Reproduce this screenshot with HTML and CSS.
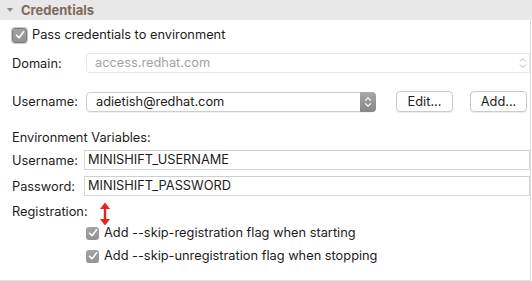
FILE: index.html
```html
<!DOCTYPE html>
<html lang="en">
<head>
    <meta charset="UTF-8">
    <title>Credentials</title>
    <link rel="stylesheet" href="styles.css">
</head>
<body>

    <!-- Section header -->
    <div class="section-header">
        <span class="twisty"></span>
        <span class="section-title">Credentials</span>
    </div>

    <!-- Credentials panel -->
    <div class="panel">
        <label class="check-row pass-row">
            <span class="checkbox big">
                <svg width="10" height="10" viewBox="0 0 10 10"><path d="M1.5 5.2 L4 7.8 L8.6 1.8" fill="none" stroke="#fff" stroke-width="1.6" stroke-linecap="round" stroke-linejoin="round"/></svg>
            </span>
            Pass credentials to environment
        </label>

        <div class="form-row domain-row">
            <span class="label">Domain:</span>
            <div class="field disabled">
                access.redhat.com
                <svg class="spin" width="8" height="12" viewBox="0 0 8 12"><path d="M1 4.5 L4 1.5 L7 4.5 M1 7.5 L4 10.5 L7 7.5" fill="none" stroke="#b5b5b5" stroke-width="1"/></svg>
            </div>
        </div>

        <div class="form-row user-row">
            <span class="label">Username:</span>
            <div class="combo">
                <span class="combo-text">adietish@redhat.com</span>
                <span class="combo-arrow">
                    <svg width="8" height="12" viewBox="0 0 8 12"><path d="M1.2 4.6 L4 1.8 L6.8 4.6 M1.2 7.4 L4 10.2 L6.8 7.4" fill="none" stroke="#fff" stroke-width="1.2"/></svg>
                </span>
            </div>
            <button class="btn edit-btn">Edit...</button>
            <button class="btn add-btn">Add...</button>
        </div>

        <div class="group-title">Environment Variables:</div>

        <div class="form-row env-row">
            <span class="label short">Username:</span>
            <div class="field">MINISHIFT_USERNAME</div>
        </div>
        <div class="form-row env-row pass-field">
            <span class="label short">Password:</span>
            <div class="field">MINISHIFT_PASSWORD</div>
        </div>

        <div class="group-title reg-title">Registration:</div>

        <label class="check-row flag-row">
            <span class="checkbox">
                <svg width="10" height="10" viewBox="0 0 10 10"><path d="M1.5 5.2 L4 7.8 L8.6 1.8" fill="none" stroke="#fff" stroke-width="1.5" stroke-linecap="round" stroke-linejoin="round"/></svg>
            </span>
            Add --skip-registration flag when starting
        </label>
        <label class="check-row flag-row second">
            <span class="checkbox">
                <svg width="10" height="10" viewBox="0 0 10 10"><path d="M1.5 5.2 L4 7.8 L8.6 1.8" fill="none" stroke="#fff" stroke-width="1.5" stroke-linecap="round" stroke-linejoin="round"/></svg>
            </span>
            Add --skip-unregistration flag when stopping
        </label>

        <!-- annotation arrow -->
        <svg class="red-arrow" width="12" height="24" viewBox="0 0 12 24">
            <path d="M6 5 L6 19" stroke="#e8231d" stroke-width="2.4"/>
            <path d="M1 7 L6 0.5 L11 7 Z M1 17 L6 23.5 L11 17 Z" fill="#e8231d"/>
        </svg>
    </div>

</body>
</html>
```

FILE: styles.css
```css
body {
    margin: 0;
    font-family: Inter, "Liberation Sans", Arial, sans-serif;
    font-size: 12.8px;
    color: #1c1c1c;
    background: #fff;
    width: 532px;
}

.section-header {
    height: 20px;
    background-color: #e8e8e8;
    display: flex;
    align-items: center;
}

.twisty {
    width: 0;
    height: 0;
    margin-left: 7px;
    border-left: 3.5px solid transparent;
    border-right: 3.5px solid transparent;
    border-top: 4px solid #8a8a8a;
}

.section-title {
    margin-left: 8px;
    font-weight: bold;
    font-size: 13px;
    color: #7d6b5a;
}

.panel {
    position: relative;
    width: 518px;
    padding: 7px 0 16px 12px;
    border-right: 1px solid #dcdcdc;
    border-bottom: 1px solid #e2e2e2;
    margin-right: 1px;
}

/* checkbox rows */
.check-row {
    display: flex;
    align-items: center;
    height: 16px;
    line-height: 16px;
    white-space: nowrap;
}

.pass-row {
    margin-left: -1px;
}

.checkbox {
    width: 13px;
    height: 13px;
    border-radius: 3px;
    background: linear-gradient(#a3a3a3, #939393);
    display: flex;
    align-items: center;
    justify-content: center;
    margin-right: 5px;
    flex-shrink: 0;
}

.checkbox.big {
    width: 13px;
    height: 13px;
    border: 1px solid #7b7b7b;
    box-shadow: 0 0 0 1px #c9c9c9;
    margin-right: 5px;
    margin-left: 1px;
}

/* form rows */
.form-row {
    display: flex;
    align-items: center;
}

.label {
    width: 74px;
    flex-shrink: 0;
}

.label.short {
    width: 72px;
}

.field {
    flex: 1;
    height: 18px;
    line-height: 18px;
    border: 1px solid #d6d6d6;
    border-top-color: #cfcfcf;
    padding-left: 3px;
    position: relative;
    white-space: nowrap;
}

.field.disabled {
    color: #a3a3a3;
    border-color: #e6e6e6;
    padding-left: 8px;
    border-radius: 3px 0 0 3px;
}

.spin {
    position: absolute;
    right: 2px;
    top: 3px;
}

.domain-row {
    margin-top: 10px;
}

.user-row {
    margin-top: 18px;
    height: 21px;
}

.combo {
    width: 288px;
    height: 18px;
    border: 1px solid #cdcdcd;
    border-radius: 4px;
    display: flex;
    box-shadow: 0 1px 1px rgba(0, 0, 0, 0.06);
}

.combo-text {
    flex: 1;
    padding-left: 9px;
    line-height: 18px;
}

.combo-arrow {
    width: 16px;
    margin: -1px -1px -1px 0;
    border-radius: 0 4px 4px 0;
    background: linear-gradient(#a9a9a9, #868686);
    display: flex;
    align-items: center;
    justify-content: center;
}

.btn {
    font-family: inherit;
    font-size: 12.8px;
    color: #1c1c1c;
    background: #fff;
    border: 1px solid #cbcbcb;
    border-radius: 4px;
    height: 21px;
    width: 57px;
    padding: 0;
    box-shadow: 0 1px 1px rgba(0, 0, 0, 0.08);
}

.edit-btn {
    margin-left: 20px;
}

.add-btn {
    margin-left: 17px;
}

.group-title {
    margin-top: 18px;
    line-height: 16px;
}

.env-row {
    margin-top: 4px;
}

.pass-field {
    margin-top: 6px;
}

.reg-title {
    margin-top: 8px;
}

.flag-row {
    margin-left: 74px;
    margin-top: 5px;
}

.flag-row.second {
    margin-top: 7px;
}

.red-arrow {
    position: absolute;
    left: 99px;
    top: 182px;
}
```
